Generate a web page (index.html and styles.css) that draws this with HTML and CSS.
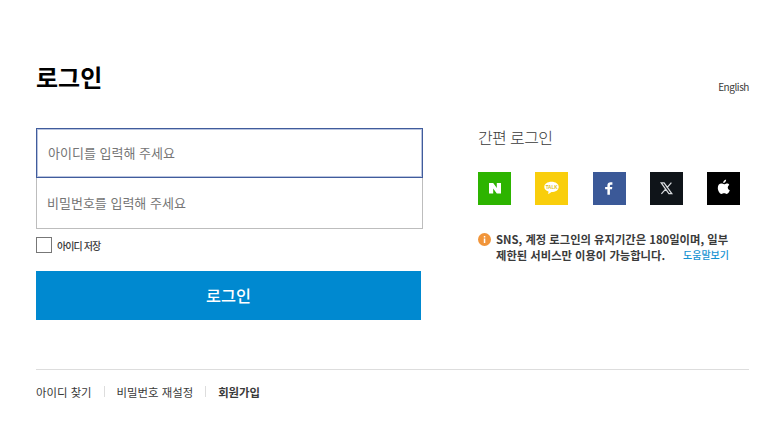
FILE: index.html
```html
<!DOCTYPE html>
<html lang="ko">
<head>
<meta charset="utf-8">
<title>로그인</title>
<link rel="stylesheet" href="styles.css">
</head>
<body>
<main class="page">
  <header class="header">
    <h1 class="title">로그인</h1>
    <a class="lang">English</a>
  </header>
  <div class="columns">
    <form class="form">
      <input class="field field-active" type="text" placeholder="아이디를 입력해 주세요">
      <input class="field" type="password" placeholder="비밀번호를 입력해 주세요">
      <label class="save"><span class="box"></span><span class="save-text">아이디 저장</span></label>
      <button class="submit" type="button">로그인</button>
    </form>
    <section class="social">
      <h2 class="social-title">간편 로그인</h2>
      <div class="icons">
        <a class="icon naver"><svg viewBox="0 0 33 33"><path fill="#fff" d="M11 11h4.2l3.6 5.1V11H23v10.6h-4.2l-3.6-5.1v5.1H11z"/></svg></a>
        <a class="icon kakao"><svg viewBox="0 0 33 33"><path fill="#fff" d="M16.5 9.8c4.1 0 7.2 2.2 7.2 5.1s-3.1 5.1-7.2 5.1l-3.3 2.3.3-2.8c-2.5-.8-4.2-2.6-4.2-4.6 0-2.9 3.1-5.1 7.2-5.1z"/><text class="talk" x="16.6" y="16.6" text-anchor="middle">TALK</text></svg></a>
        <a class="icon facebook"><svg viewBox="0 0 33 33"><path fill="#fff" d="M14.4 22.8v-5.5h-2.3v-2.4h2.3v-1.4c0-2.1 1.2-3.2 3.2-3.2h1.8v2.4h-1.2c-.9 0-1.3.4-1.3 1.1v1.1h2.4l-.3 2.4h-2.1v5.5z"/></svg></a>
        <a class="icon x"><svg viewBox="0 0 33 33"><path fill="none" stroke="#d9dcdf" stroke-width="1.25" d="M11.2 10.9h2.9l7.7 10.8h-2.9zM21.4 10.6l-4.6 5.2M15.8 16.9l-4.4 4.9"/></svg></a>
        <a class="icon apple"><svg viewBox="0 0 33 33"><path fill="#fff" d="M19.1 7.5c.2 1.8-1.3 3.5-2.9 3.5-.2-1.7 1.3-3.3 2.9-3.5zM22.3 12.9c-2.2 1.4-1.9 4.3.5 5.3-.6 1.6-1.7 3.7-3.1 3.7-1 0-1.4-.6-2.6-.6s-1.6.6-2.6.6c-1.7 0-3.7-3.3-3.7-6 0-2.8 1.7-4.3 3.5-4.3 1.2 0 2 .7 2.8.7s1.7-.8 3-.8c.9 0 1.7.5 2.2 1.4z"/></svg></a>
      </div>
      <div class="notice">
        <svg class="info" viewBox="0 0 13 13"><circle cx="6.5" cy="6.5" r="6.5" fill="#f1953a"/><path fill="#fff" d="M5.8 3h1.5v1.5H5.8zM5.8 5.4h1.5V10H5.8z"/></svg>
        <p class="notice-text">SNS, 계정 로그인의 유지기간은 180일이며, 일부<br><span class="row"><span>제한된 서비스만 이용이 가능합니다.</span><a class="help">도움말보기</a></span></p>
      </div>
    </section>
  </div>
  <nav class="links">
    <a>아이디 찾기</a><a class="split">비밀번호 재설정</a><a class="split join">회원가입</a>
  </nav>
</main>
</body>
</html>
```
FILE: styles.css
```css
* { box-sizing: border-box; }
body {
  margin: 0;
  background: #fff;
  color: #3a3a3a;
  font-family: "Noto Sans CJK KR", sans-serif;
}
.page { width: 713px; margin: 0 0 0 36px; padding-top: 59px; }
.header { display: flex; justify-content: space-between; height: 69px; }
.title { margin: 0; font-size: 24px; line-height: 36px; font-weight: 700; color: #000; }
.lang { margin-top: 20px; font-size: 10px; line-height: 16px; letter-spacing: -0.45px; }
.columns { display: flex; justify-content: space-between; height: 241px; }
.form { width: 387px; display: flex; flex-direction: column; }
.field {
  width: 387px;
  height: 51px;
  padding: 0 10px 2px;
  border: 1px solid #bdbdbd;
  border-top: 0;
  border-radius: 0;
  outline: 0;
  background: #fff;
  font: 400 13px "Noto Sans CJK KR", sans-serif;
}
.field::placeholder { color: #757575; opacity: 1; }
.field-active { height: 50px; border: 1px solid #405c9c; box-shadow: inset 0 0 0 1px #b9c4df; padding-left: 11px; }
.save { display: flex; align-items: center; height: 16px; margin-top: 8px; }
.box { width: 16px; height: 16px; border: 1px solid #777; }
.save-text { margin-left: 5px; font-size: 10px; letter-spacing: -0.9px; font-weight: 500; }
.submit {
  width: 385px;
  height: 49px;
  margin-top: 18px;
  padding: 0 0 1px;
  border: 0;
  background: #0089d0;
  color: #fff;
  font: 500 16.3px "Noto Sans CJK KR", sans-serif;
}
.social { width: 271px; }
.social-title { margin: -1px 0 0; height: 45px; font-size: 16px; line-height: 20px; font-weight: 300; letter-spacing: -0.6px; }
.icons { display: flex; gap: 24.3px; }
.icon { width: 33px; height: 33px; flex: none; }
.icon svg { display: block; width: 33px; height: 33px; }
.naver { background: #2db400; }
.kakao { background: #f9ce0c; }
.facebook { background: #3b5998; }
.x { background: #0f1419; }
.apple { background: #000; }
.talk { font: 700 4.6px "Liberation Sans", sans-serif; fill: #e0bd20; }
.notice { display: flex; margin-top: 26px; }
.info { width: 13px; height: 13px; margin: 2px 5px 0 0; flex: none; }
.notice-text { margin: 0; width: 233px; font-size: 11.3px; line-height: 16px; font-weight: 700; white-space: nowrap; }
.row { display: flex; justify-content: space-between; }
.help { font-size: 10px; font-weight: 500; color: #1593d2; }
.links { display: flex; align-items: center; border-top: 1px solid #ddd; height: 44px; font-size: 11.4px; }
.split { display: flex; align-items: center; margin-left: 12px; }
.split::before { content: ""; width: 1px; height: 11px; margin-right: 12px; background: #ddd; }
.join { font-weight: 700; }
```
